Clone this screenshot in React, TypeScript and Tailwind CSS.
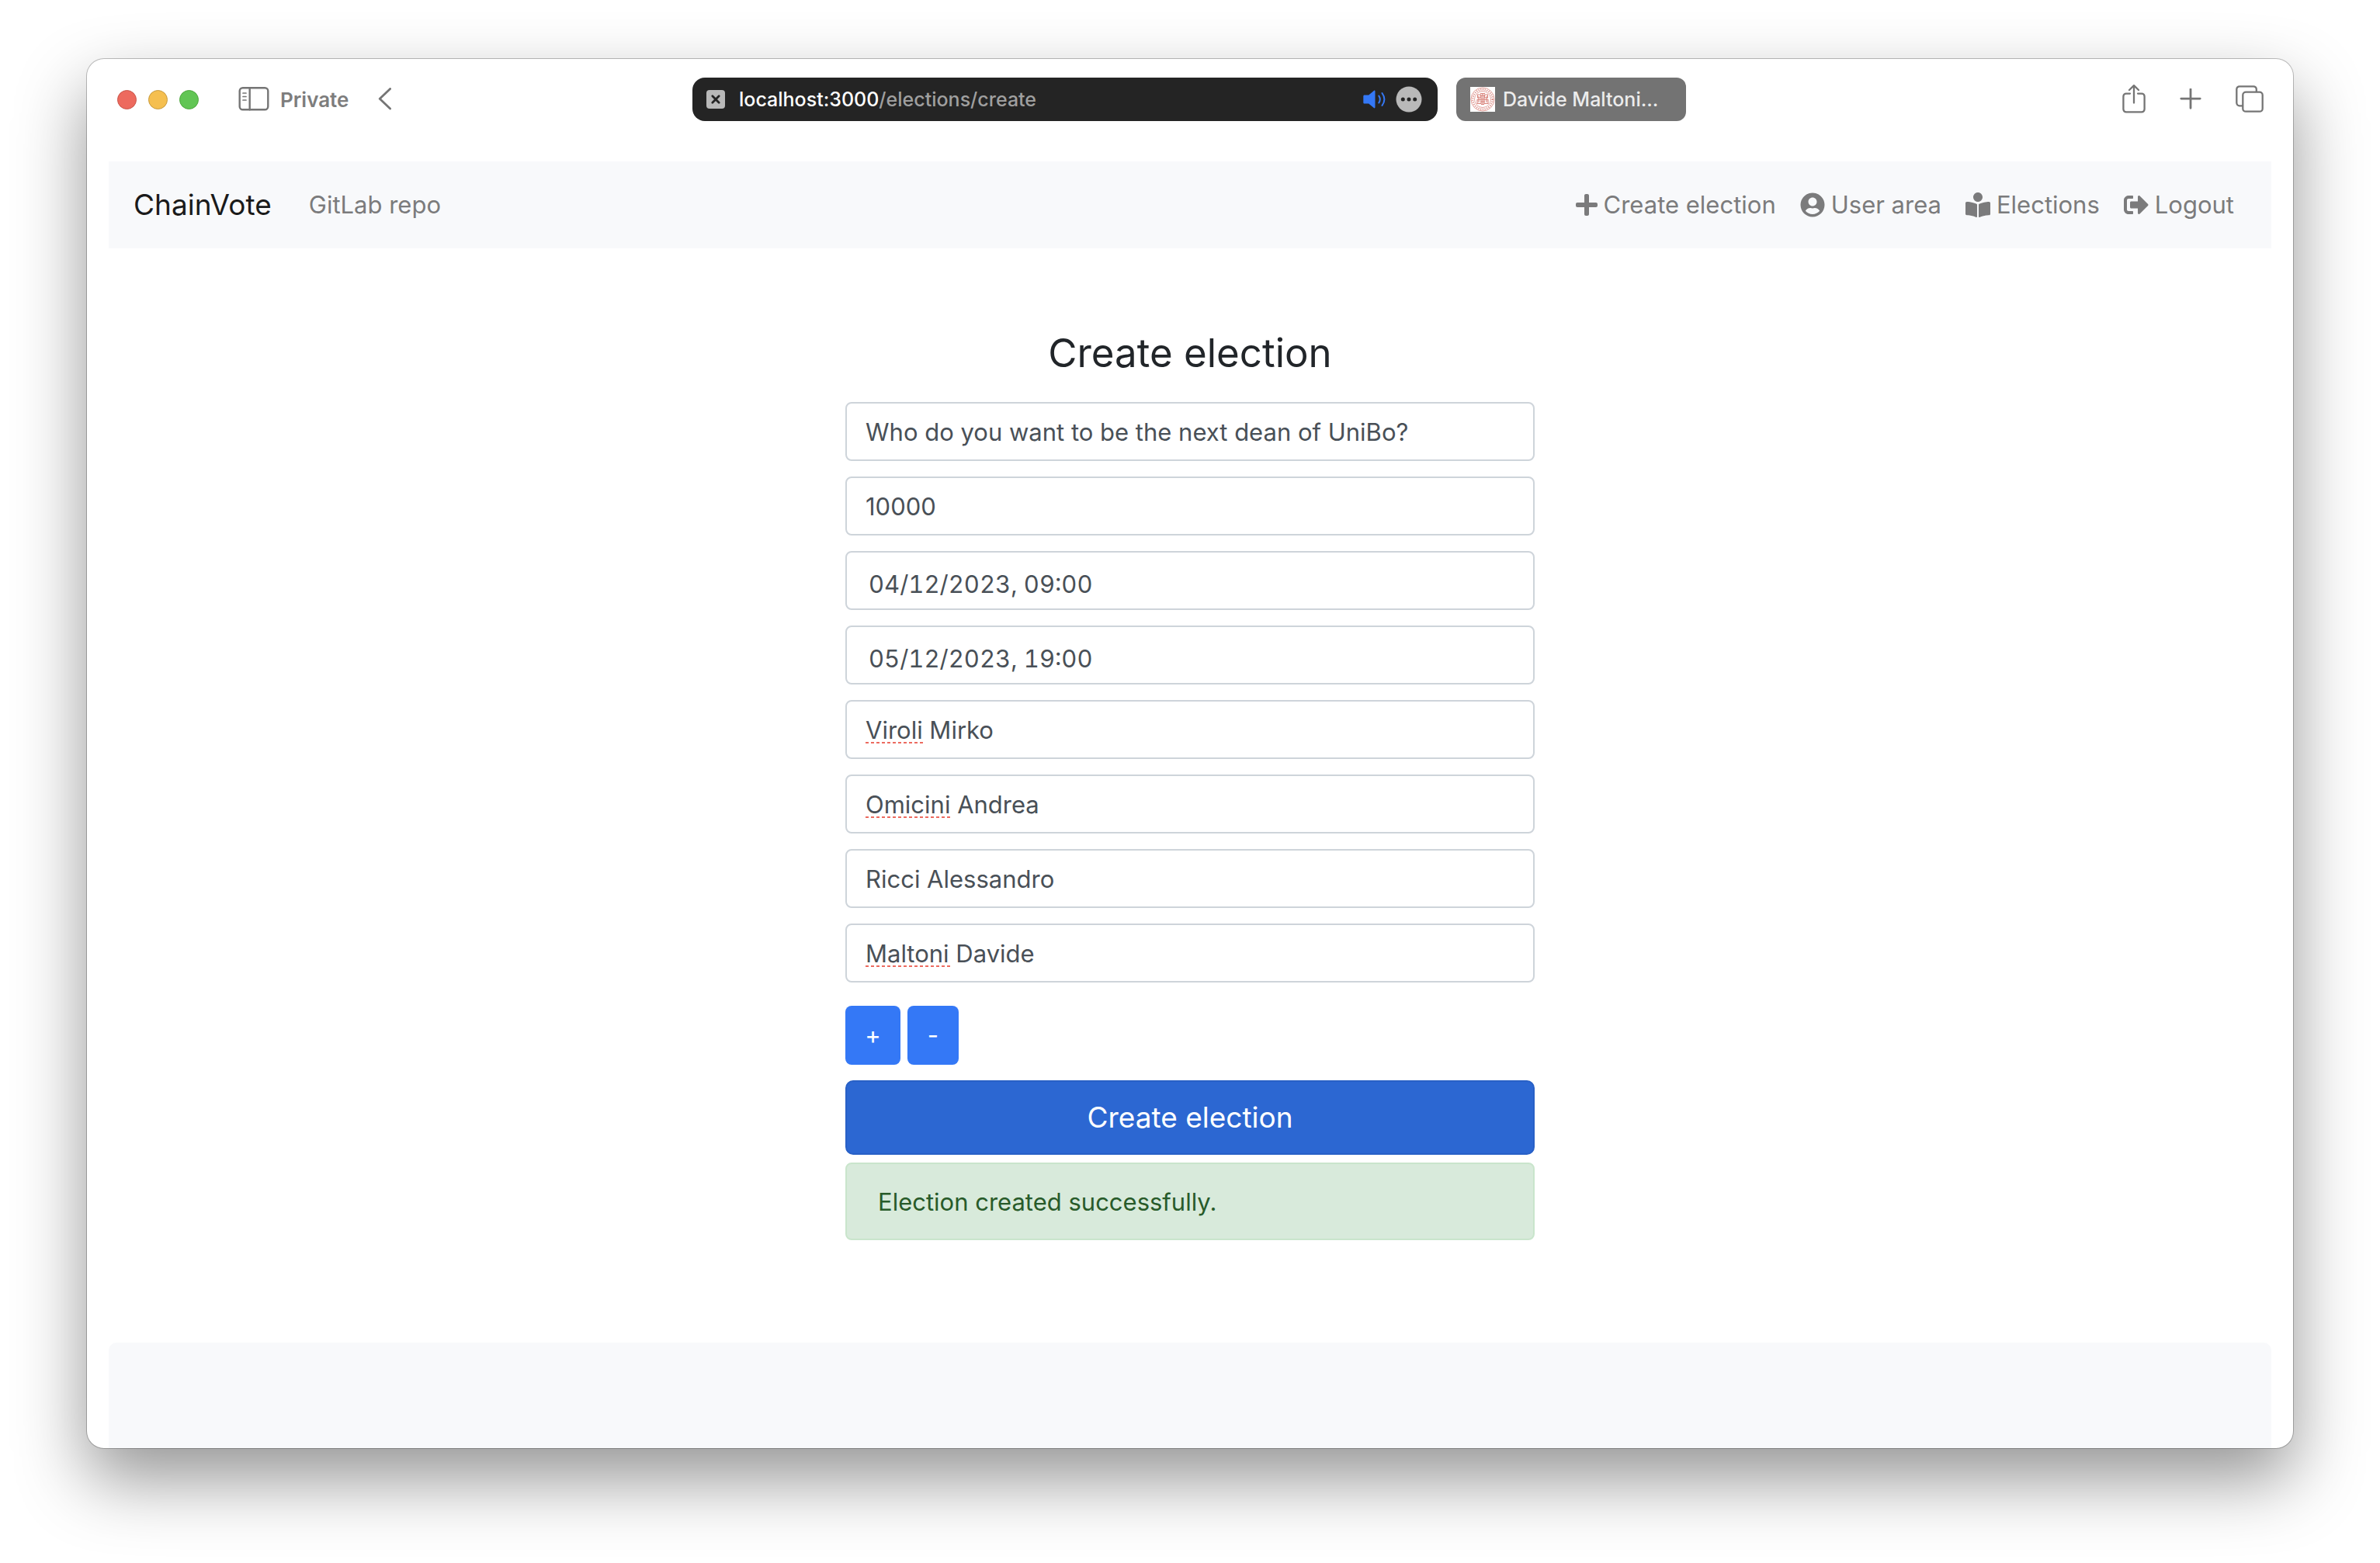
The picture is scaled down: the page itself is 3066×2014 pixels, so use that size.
import { useState } from "react";
import { FaBookReader, FaPlus, FaSignOutAlt, FaUserCircle } from "react-icons/fa";

const fieldClass =
  "block w-full rounded-lg border-2 border-[#ced4da] bg-white px-6 pt-[13px] pb-[11px] text-[31px] leading-[48px] text-[#495057] outline-none";
const dateClass =
  "block w-full rounded-lg border-2 border-[#ced4da] bg-white px-7 pt-[17px] pb-[7px] text-[31px] leading-[48px] text-[#495057] tabular-nums outline-none";

function TrafficLights() {
  return (
    <div className="flex gap-[15px]">
      <button aria-label="Close" className="size-[25px] rounded-full border border-[#c9564b] bg-[#ed6a5e]" />
      <button aria-label="Minimise" className="size-[25px] rounded-full border border-[#c89b3f] bg-[#f5bf4f]" />
      <button aria-label="Zoom" className="size-[25px] rounded-full border border-[#4ea73f] bg-[#61c554]" />
    </div>
  );
}

function SidebarIcon() {
  return (
    <svg width="40" height="32" viewBox="0 0 40 32" fill="none" stroke="#757575" strokeWidth="2.4" strokeLinecap="round">
      <rect x="1.7" y="1.2" width="36.6" height="28" rx="4" />
      <path d="M14.7 1.2v28" />
      <path d="M6 8h4M6 12.500h4M6 17h4" strokeWidth="1.700" />
    </svg>
  );
}

function BackIcon() {
  return (
    <svg width="18" height="30" viewBox="0 0 18 30" fill="none" stroke="#757575" strokeWidth="2.8" strokeLinecap="round" strokeLinejoin="round">
      <path d="M15.600 1.400L2.200 14.200l13.400 12.800" />
    </svg>
  );
}

function SiteIcon() {
  return (
    <svg width="24" height="24" viewBox="0 0 24 24">
      <rect width="24" height="24" rx="4" fill="#b9b9b9" />
      <path d="M7.800 7.800l8.400 8.400M16.200 7.800l-8.400 8.400" stroke="#242424" strokeWidth="2.800" strokeLinecap="round" />
    </svg>
  );
}

function SpeakerIcon() {
  return (
    <svg width="30" height="24" viewBox="0 0 30 24" fill="none">
      <path d="M1.800 6.500h5.400L13.800 1c.9-.7 1.700-.4 1.700.7v20.600c0 1.100-.8 1.400-1.700.7L7.200 17.500H1.800C.9 17.500.3 17 .3 16V8c0-1 .6-1.500 1.500-1.500z" fill="#3478f6" />
      <path d="M20.300 7.500c1.900 2.900 1.900 6.100 0 9M24.500 4c3.600 5 3.600 11 0 16" stroke="#3478f6" strokeWidth="2" strokeLinecap="round" />
    </svg>
  );
}

function MoreIcon() {
  return (
    <svg width="34" height="34" viewBox="0 0 34 34">
      <circle cx="17" cy="17" r="16.500" fill="#b9b9b9" />
      <g fill="#242424">
        <circle cx="9.300" cy="17" r="2.500" />
        <circle cx="17" cy="17" r="2.500" />
        <circle cx="24.700" cy="17" r="2.500" />
      </g>
    </svg>
  );
}

function SealIcon() {
  return (
    <svg width="32" height="32" viewBox="0 0 32 32" fill="none" stroke="#d9847c">
      <rect width="32" height="32" fill="#fff" stroke="none" />
      <circle cx="16" cy="16" r="15" strokeWidth=".8" />
      <circle cx="16" cy="16" r="12.700" strokeWidth="2.200" strokeDasharray="1.100 1.600" />
      <circle cx="16" cy="16" r="10.500" strokeWidth=".7" />
      <path d="M9.500 10h4v4h-4zM18.500 10h4v4h-4zM13 8.500h6M14 11h4v5h-4zM9 16.500h5v5H9zM18 16.500h5v5h-5zM13 19h6M14 22.500h4M11 12v8M21 12v8M16 9v14" strokeWidth="1.100" />
    </svg>
  );
}

function ShareIcon() {
  return (
    <svg width="30" height="38" viewBox="0 0 30 38" fill="none" stroke="#757575" strokeWidth="2.300" strokeLinecap="round" strokeLinejoin="round">
      <path d="M10 11.600H5A3.600 3.600 0 0 0 1.400 15.200v16.600A3.600 3.600 0 0 0 5 35.400h20a3.600 3.600 0 0 0 3.600-3.600V15.200a3.600 3.600 0 0 0-3.600-3.600h-5" />
      <path d="M15 23.500V1.500M9 7L15 1.200l6 5.800" />
    </svg>
  );
}

function NewTabIcon() {
  return (
    <svg width="28" height="28" viewBox="0 0 28 28" fill="none" stroke="#757575" strokeWidth="2.800" strokeLinecap="round">
      <path d="M14 .9v24.400M1.800 13.100h24.400" />
    </svg>
  );
}

function TabsIcon() {
  return (
    <svg width="36" height="36" viewBox="0 0 36 36" fill="none" stroke="#757575" strokeWidth="2.300">
      <path d="M9.300 26.300H5A3.700 3.700 0 0 1 1.300 22.600V5A3.700 3.700 0 0 1 5 1.300h18.100A3.700 3.700 0 0 1 26.800 5v3.700" />
      <rect x="9.300" y="8.700" width="25.400" height="25" rx="3.800" />
    </svg>
  );
}

function Toolbar() {
  return (
    <header className="grid h-[104px] grid-cols-[1fr_auto_1fr] items-center pr-[38px] pl-[39px] text-[#757575]">
      <div className="flex items-center">
        <TrafficLights />
        <button aria-label="Show sidebar" className="ml-[51px] flex items-center gap-[14px] text-[26px] font-semibold text-[#7d7d7d]">
          <SidebarIcon />
          Private
        </button>
        <button aria-label="Back" className="ml-[38px]">
          <BackIcon />
        </button>
      </div>
      <div className="mr-[3px] flex gap-6 text-[25px] font-medium">
        <div className="flex h-14 w-[960px] items-center rounded-2xl bg-[#242424] pr-5 pl-[18px]">
          <SiteIcon />
          <a href="#url" className="ml-[18px] flex-1 pt-px text-[#9f9f9f]">
            <span className="text-white">localhost:3000</span>/elections/create
          </a>
          <button aria-label="Mute tab">
            <SpeakerIcon />
          </button>
          <button aria-label="Page menu" className="ml-3">
            <MoreIcon />
          </button>
        </div>
        <button className="flex h-14 w-[296px] items-center gap-[10px] rounded-xl bg-[#737373] px-[18px] text-[#ececec]">
          <SealIcon />
          <span className="pt-px whitespace-nowrap">Davide Maltoni...</span>
        </button>
      </div>
      <div className="flex items-center justify-end gap-[44px]">
        <button aria-label="Share">
          <ShareIcon />
        </button>
        <button aria-label="New tab">
          <NewTabIcon />
        </button>
        <button aria-label="Tab overview">
          <TabsIcon />
        </button>
      </div>
    </header>
  );
}

const links = [
  { label: "Create election", icon: FaPlus, size: "h-8 w-7" },
  { label: "User area", icon: FaUserCircle, size: "size-8" },
  { label: "Elections", icon: FaBookReader, size: "size-8" },
  { label: "Logout", icon: FaSignOutAlt, size: "size-8" },
];

function NavBar() {
  return (
    <nav className="flex h-28 items-center bg-[#f8f9fb] px-8 text-[31px] leading-[48px] text-[#7b7b7c]">
      <a href="#home" className="text-[37px] text-[#1a1a1a]">
        ChainVote
      </a>
      <a href="#repo" className="ml-12">
        GitLab repo
      </a>
      <ul className="mr-4 ml-auto flex gap-[31px]">
        {links.map(({ label, icon: Icon, size }) => (
          <li key={label}>
            <a href="#nav" className="flex items-center gap-2">
              <Icon className={size} />
              {label}
            </a>
          </li>
        ))}
      </ul>
    </nav>
  );
}

const candidates = [
  { name: "Viroli Mirko", mark: "w-[74px]" },
  { name: "Omicini Andrea", mark: "w-[109px]" },
  { name: "Ricci Alessandro", mark: "" },
  { name: "Maltoni Davide", mark: "w-[109px]" },
];

function SpellingMark({ width }: { width: string }) {
  return (
    <span
      className={`pointer-events-none absolute bottom-5 left-[26px] h-[2px] bg-[repeating-linear-gradient(90deg,#ec6b60_0_4px,transparent_4px_7px)] ${width}`}
    />
  );
}

function ElectionForm() {
  const [created, setCreated] = useState(true);
  return (
    <form
      className="mx-auto mt-[101px] flex w-[888px] flex-col"
      onSubmit={(e) => {
        e.preventDefault();
        setCreated(true);
      }}
    >
      <h1 className="mb-[29px] text-center text-[51px] leading-[68px] text-[#212529]">Create election</h1>
      <div className="flex flex-col gap-5">
        <input aria-label="Question" spellCheck={false} className={fieldClass} defaultValue="Who do you want to be the next dean of UniBo?" />
        <input aria-label="Voters" spellCheck={false} className={fieldClass} defaultValue="10000" />
        <input aria-label="Start date" spellCheck={false} className={dateClass} defaultValue="04/12/2023, 09:00" />
        <input aria-label="End date" spellCheck={false} className={dateClass} defaultValue="05/12/2023, 19:00" />
        {candidates.map(({ name, mark }, i) => (
          <div key={name} className="relative">
            <input aria-label={`Candidate ${i + 1}`} spellCheck={false} className={fieldClass} defaultValue={name} />
            {mark && <SpellingMark width={mark} />}
          </div>
        ))}
      </div>
      <div className="mt-[30px] flex gap-[9px] text-[31px] leading-[48px] text-white">
        <button type="button" className="h-[76px] w-[71px] rounded-lg bg-[#3478f6]">
          +
        </button>
        <button type="button" className="h-[76px] w-[66px] rounded-lg bg-[#3478f6]">
          -
        </button>
      </div>
      <button type="submit" className="mt-5 h-24 rounded-[10px] border-2 border-[#2860c6] bg-[#2c67d2] text-[37px] text-white">
        Create election
      </button>
      {created && (
        <div role="alert" className="mt-[10px] rounded-lg border-2 border-[#c9e5cc] bg-[#d8eadb] px-10 pt-[25px] pb-[23px] text-[31px] leading-[48px] text-[#285b2a]">
          Election created successfully.
        </div>
      )}
    </form>
  );
}

export default function App() {
  return (
    <div className="flex min-h-screen flex-col bg-white px-28 pt-[76px] pb-[148px] font-['Inter',sans-serif]">
      <div className="flex flex-1 flex-col overflow-hidden rounded-[22px] bg-white shadow-[0_0_0_1px_rgba(0,0,0,0.24),0_40px_90px_rgba(0,0,0,0.42)]">
        <Toolbar />
        <main className="flex flex-1 flex-col px-7 pt-7">
          <NavBar />
          <ElectionForm />
          <footer className="mt-[132px] flex-1 rounded-t-[10px] bg-[#f8f9fb]" />
        </main>
      </div>
    </div>
  );
}
